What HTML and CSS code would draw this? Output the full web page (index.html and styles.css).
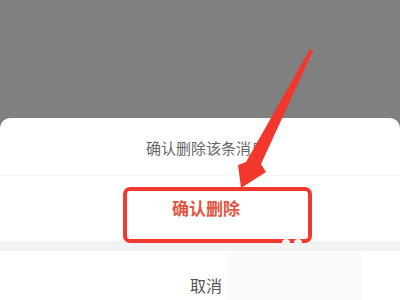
FILE: index.html
```html
<!DOCTYPE html>
<html lang="zh-CN">
<head>
<meta charset="utf-8">
<link rel="stylesheet" href="styles.css">
</head>
<body>
<div class="screen">
  <div class="dim"></div>
  <div class="sheet">
    <div class="row msg">确认删除该条消息</div>
    <div class="row action">确认删除</div>
    <div class="gap"></div>
    <div class="row cancel">取消</div>
  </div>
  <div class="smudge"></div>
  <div class="highlight"></div>
  <div class="dot d1"></div>
  <div class="dot d2"></div>
  <svg class="arrow" width="400" height="300" viewBox="0 0 400 300">
    <polygon points="310,49 313,51 261,164 266,172 241,188 238,165 246,162" fill="#f4372d"/>
  </svg>
</div>
</body>
</html>
```
FILE: styles.css
```css
html, body {
  margin: 0;
  padding: 0;
}
body {
  width: 400px;
  height: 300px;
  overflow: hidden;
  background: #808080;
  font-family: "Noto Sans CJK SC", "Noto Sans", sans-serif;
}
.screen {
  position: relative;
  width: 400px;
  height: 300px;
  overflow: hidden;
}
.dim {
  height: 118px;
  background: #808080;
}
.sheet {
  background: #ffffff;
  border-radius: 10px 10px 0 0;
  display: flex;
  flex-direction: column;
  height: 200px;
}
.row {
  display: flex;
  align-items: center;
  justify-content: center;
  padding-left: 12px;
}
.msg {
  height: 59px;
  font-size: 15px;
  color: #666666;
  border-bottom: 1px solid #f5f5f5;
  box-sizing: border-box;
  padding-top: 2px;
}
.action {
  height: 65px;
  font-size: 17px;
  font-weight: bold;
  color: #e2553f;
  padding-bottom: 2px;
  box-sizing: border-box;
}
.gap {
  height: 10px;
  background: #f2f2f2;
}
.cancel {
  height: 66px;
  font-size: 16px;
  color: #555555;
  padding-top: 2px;
}
.smudge {
  position: absolute;
  left: 228px;
  top: 253px;
  width: 134px;
  height: 50px;
  background: #fafafa;
}
.highlight {
  position: absolute;
  left: 123px;
  top: 187px;
  width: 189px;
  height: 56px;
  box-sizing: border-box;
  border: 4.5px solid #f2392f;
  border-radius: 7px;
}
.dot {
  position: absolute;
  top: 239px;
  width: 8px;
  height: 8px;
  border-radius: 50%;
  background: #f4f4f4;
}
.d1 { left: 282px; }
.d2 { left: 294px; }
.arrow {
  position: absolute;
  left: 0;
  top: 0;
}
```
